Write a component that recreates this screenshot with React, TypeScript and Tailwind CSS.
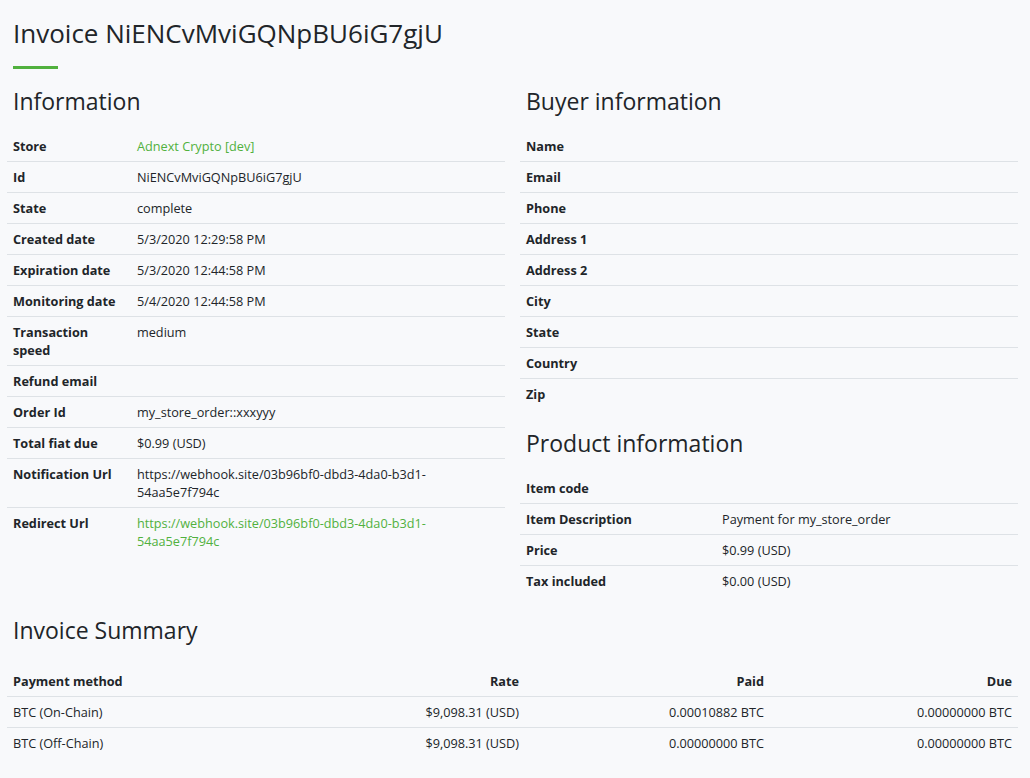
import React from 'react';

type Row = { label: string; value?: string; link?: boolean };

const info: Row[] = [
  { label: 'Store', value: 'Adnext Crypto [dev]', link: true },
  { label: 'Id', value: 'NiENCvMviGQNpBU6iG7gjU' },
  { label: 'State', value: 'complete' },
  { label: 'Created date', value: '5/3/2020 12:29:58 PM' },
  { label: 'Expiration date', value: '5/3/2020 12:44:58 PM' },
  { label: 'Monitoring date', value: '5/4/2020 12:44:58 PM' },
  { label: 'Transaction speed', value: 'medium' },
  { label: 'Refund email' },
  { label: 'Order Id', value: 'my_store_order::xxxyyy' },
  { label: 'Total fiat due', value: '$0.99 (USD)' },
  { label: 'Notification Url', value: 'https://webhook.site/03b96bf0-dbd3-4da0-b3d1-54aa5e7f794c' },
  { label: 'Redirect Url', value: 'https://webhook.site/03b96bf0-dbd3-4da0-b3d1-54aa5e7f794c', link: true },
];

const buyer: Row[] = ['Name', 'Email', 'Phone', 'Address 1', 'Address 2', 'City', 'State', 'Country', 'Zip'].map(
  (label) => ({ label })
);

const product: Row[] = [
  { label: 'Item code' },
  { label: 'Item Description', value: 'Payment for my_store_order' },
  { label: 'Price', value: '$0.99 (USD)' },
  { label: 'Tax included', value: '$0.00 (USD)' },
];

const payments = [
  { method: 'BTC (On-Chain)', rate: '$9,098.31 (USD)', paid: '0.00010882 BTC', due: '0.00000000 BTC' },
  { method: 'BTC (Off-Chain)', rate: '$9,098.31 (USD)', paid: '0.00000000 BTC', due: '0.00000000 BTC' },
];

function InfoTable({ rows, labelWidth }: { rows: Row[]; labelWidth: string }) {
  return (
    <table className="w-full border-collapse text-[12.7px] leading-[18px]">
      <tbody>
        {rows.map((r, i) => (
          <tr key={i} className={i > 0 ? 'border-t border-[#dee2e6]' : ''}>
            <th className={`${labelWidth} px-[6px] py-[6px] text-left align-top font-bold`}>{r.label}</th>
            <td className={`px-[6px] py-[6px] align-top ${r.link ? 'text-[#51b13e]' : ''}`}>{r.value}</td>
          </tr>
        ))}
      </tbody>
    </table>
  );
}

function Heading({ children, className = '' }: { children: React.ReactNode; className?: string }) {
  return <h3 className={`px-[6px] text-[23px] leading-[29px] font-normal mb-[15px] ${className}`}>{children}</h3>;
}

export default function App() {
  return (
    <div
      className="min-h-screen bg-[#f8f9fb] text-[#212529] pl-[7px] pr-[12px] pt-[16px] pb-6"
      style={{ fontFamily: '"Open Sans", "Noto Sans", sans-serif' }}
    >
      <div className="px-[6px]">
        <h2 className="text-[26px] leading-[34px] font-normal">Invoice NiENCvMviGQNpBU6iG7gjU</h2>
        <div className="mt-[16px] h-[3px] w-[45px] bg-[#51b13e]" />
      </div>

      <div className="mt-[18px] grid grid-cols-2 gap-x-[15px]">
        <div>
          <Heading>Information</Heading>
          <InfoTable rows={info} labelWidth="w-[124px]" />
        </div>
        <div>
          <Heading>Buyer information</Heading>
          <InfoTable rows={buyer} labelWidth="w-[196px]" />
          <Heading className="mt-[20px]">Product information</Heading>
          <InfoTable rows={product} labelWidth="w-[196px]" />
        </div>
      </div>

      <Heading className="mt-[20px] mb-[21px]">Invoice Summary</Heading>
      <table className="w-full border-collapse text-[12.7px] leading-[18px]">
        <thead>
          <tr className="border-b border-[#dee2e6]">
            <th className="w-[260px] px-[6px] py-[6px] text-left font-bold">Payment method</th>
            <th className="w-[258px] px-[6px] py-[6px] text-right font-bold">Rate</th>
            <th className="w-[245px] px-[6px] py-[6px] text-right font-bold">Paid</th>
            <th className="px-[6px] py-[6px] text-right font-bold">Due</th>
          </tr>
        </thead>
        <tbody>
          {payments.map((p, i) => (
            <tr key={i} className={i > 0 ? 'border-t border-[#dee2e6]' : ''}>
              <td className="px-[6px] py-[6px]">{p.method}</td>
              <td className="px-[6px] py-[6px] text-right">{p.rate}</td>
              <td className="px-[6px] py-[6px] text-right">{p.paid}</td>
              <td className="px-[6px] py-[6px] text-right">{p.due}</td>
            </tr>
          ))}
        </tbody>
      </table>
    </div>
  );
}
